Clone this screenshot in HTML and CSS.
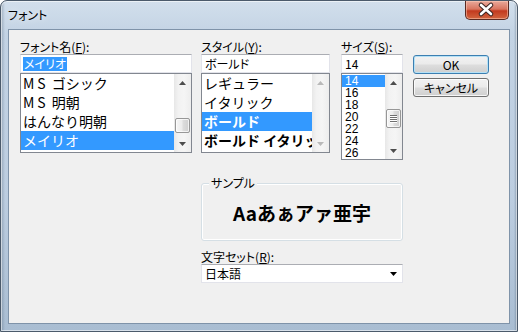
FILE: index.html
```html
<!DOCTYPE html>
<html lang="ja">
<head>
<meta charset="utf-8">
<title>フォント</title>
<link rel="stylesheet" href="styles.css">
</head>
<body>
<div class="window">
  <div class="titlebar"><span class="title">フォント</span></div>
  <div class="close">
    <svg width="44" height="19" viewBox="0 0 44 19">
      <path d="M17 5 L27 14 M27 5 L17 14" stroke="#3a2320" stroke-width="4.6" stroke-linecap="round"/>
      <path d="M17 5 L27 14 M27 5 L17 14" stroke="#ffffff" stroke-width="2.6" stroke-linecap="round"/>
    </svg>
  </div>
  <div class="client">
    <div class="top">
      <div class="col col-font">
        <div class="label">フォント名(<u>F</u>):</div>
        <div class="input"><span class="sel">メイリオ</span></div>
        <div class="list list-font">
          <div class="items">
            <div class="item"><span class="ms">MS</span> ゴシック</div>
            <div class="item"><span class="ms">MS</span> 明朝</div>
            <div class="item">はんなり明朝</div>
            <div class="item selected">メイリオ</div>
          </div>
          <div class="sb">
            <div class="arr"><svg width="7" height="4" viewBox="0 0 7 4"><polygon points="3.5,0 7,4 0,4"/></svg></div>
            <div class="track"><div class="sp sp-font"></div><div class="thumb thumb-font"></div></div>
            <div class="arr"><svg width="7" height="4" viewBox="0 0 7 4"><polygon points="0,0 7,0 3.5,4"/></svg></div>
          </div>
        </div>
      </div>
      <div class="col col-style">
        <div class="label">スタイル(<u>Y</u>):</div>
        <div class="input">ボールド</div>
        <div class="list list-style">
          <div class="items">
            <div class="item">レギュラー</div>
            <div class="item">イタリック</div>
            <div class="item selected bold">ボールド</div>
            <div class="item bold">ボールド イタリック</div>
          </div>
          <div class="sb disabled">
            <div class="arr"><svg width="7" height="4" viewBox="0 0 7 4"><polygon points="3.5,0 7,4 0,4"/></svg></div>
            <div class="track"></div>
            <div class="arr"><svg width="7" height="4" viewBox="0 0 7 4"><polygon points="0,0 7,0 3.5,4"/></svg></div>
          </div>
        </div>
      </div>
      <div class="col col-size">
        <div class="label">サイズ(<u>S</u>):</div>
        <div class="input">14</div>
        <div class="list list-size">
          <div class="items">
            <div class="item selected">14</div>
            <div class="item">16</div>
            <div class="item">18</div>
            <div class="item">20</div>
            <div class="item">22</div>
            <div class="item">24</div>
            <div class="item">26</div>
          </div>
          <div class="sb">
            <div class="arr"><svg width="7" height="4" viewBox="0 0 7 4"><polygon points="3.5,0 7,4 0,4"/></svg></div>
            <div class="track"><div class="sp sp-size"></div><div class="thumb thumb-size"><span></span><span></span><span></span><span></span></div></div>
            <div class="arr"><svg width="7" height="4" viewBox="0 0 7 4"><polygon points="0,0 7,0 3.5,4"/></svg></div>
          </div>
        </div>
      </div>
      <div class="buttons">
        <div class="btn default">OK</div>
        <div class="btn">キャンセル</div>
      </div>
    </div>
    <div class="lower">
      <div class="group">
        <span class="legend">サンプル</span>
        <div class="sample">Aaあぁアァ亜宇</div>
      </div>
      <div class="label label-charset">文字セット(<u>R</u>):</div>
      <div class="combo">
        <span>日本語</span>
        <svg width="7" height="4" viewBox="0 0 7 4"><polygon points="0,0 7,0 3.5,4" fill="#000"/></svg>
      </div>
    </div>
  </div>
</div>
</body>
</html>
```

FILE: styles.css
```css
html, body {
  margin: 0;
  padding: 0;
  background: #ffffff;
}

body {
  font-family: "Noto Sans CJK JP", "Noto Sans", sans-serif;
  color: #000;
}

.window {
  position: relative;
  width: 518px;
  height: 332px;
  box-sizing: border-box;
  border: 1px solid #4b5a6b;
  border-radius: 7px 7px 0 0;
  background:
    linear-gradient(90deg, rgba(70,90,110,0.35) 0px, rgba(0,0,0,0) 4px, rgba(0,0,0,0) 513px, rgba(70,90,110,0.45) 516px),
    linear-gradient(180deg, #d2dfec 0%, #c3d3e4 10%, #bccde0 60%, #a9bdd2 100%);
  padding: 0 7px 7px 7px;
  display: flex;
  flex-direction: column;
  box-shadow: inset 0 0 0 1px rgba(255,255,255,0.55);
}

.titlebar {
  height: 28px;
  display: flex;
  align-items: center;
  flex-shrink: 0;
}

.title {
  font-size: 12px;
  line-height: 14px;
  font-feature-settings: "palt";
  color: #000;
  text-shadow: 0 0 6px rgba(255,255,255,0.9);
}

.close {
  position: absolute;
  top: 0;
  right: 8px;
  width: 44px;
  height: 19px;
  box-sizing: border-box;
  border: 1px solid #5a2a22;
  border-top: none;
  border-radius: 0 0 5px 5px;
  background: linear-gradient(180deg, #e9a99b 0%, #d9755f 45%, #c23a1f 55%, #d2653f 100%);
  box-shadow: inset 0 0 0 1px rgba(255,210,190,0.5);
  display: flex;
  align-items: center;
  justify-content: center;
}

.close svg {
  display: block;
  margin-left: -2px;
  margin-top: -1px;
}

.client {
  height: 295px;
  box-sizing: border-box;
  background: #f0f0f0;
  border: 1px solid #7f93a9;
  padding: 10px 0 0 11px;
  display: flex;
  flex-direction: column;
}

.top {
  display: flex;
  align-items: flex-start;
}

.col {
  display: flex;
  flex-direction: column;
}

.col-font { width: 172px; }
.col-style { width: 129px; margin-left: 9px; }
.col-size { width: 62px; margin-left: 11px; }

.label {
  font-size: 12px;
  line-height: 14px;
  height: 14px;
  font-feature-settings: "palt";
  white-space: nowrap;
}

.label u {
  text-decoration: underline;
  text-underline-offset: 1px;
}

.input {
  height: 19px;
  box-sizing: border-box;
  border: 1px solid #e2e3ea;
  border-top-color: #abadb3;
  background: #fff;
  font-size: 12px;
  line-height: 17px;
  padding-left: 3px;
  font-feature-settings: "palt";
  white-space: nowrap;
}

.input .sel {
  background: #3399ff;
  color: #fff;
  display: inline-block;
  line-height: 14px;
  padding: 0 1px;
  margin-left: -1px;
}

.list {
  display: flex;
  box-sizing: border-box;
  border: 1px solid #828790;
  background: #fff;
  overflow: hidden;
}

.list-font, .list-style { height: 80px; }
.list-size { height: 87px; }

.items {
  flex: 1;
  min-width: 0;
  overflow: hidden;
}

.item {
  height: 19px;
  line-height: 19px;
  font-size: 14px;
  padding-left: 2px;
  white-space: nowrap;
  overflow: hidden;
}

.item .ms {
  letter-spacing: 3px;
}

.item.selected {
  background: #3399ff;
  color: #fff;
}

.item.bold { font-weight: 700; }

.list-size .item {
  height: 12px;
  line-height: 12px;
  font-family: "Liberation Sans", "Noto Sans", sans-serif;
  font-size: 12px;
  padding-left: 3px;
}

.list-size .item:first-child { margin-top: 1px; }

.sb {
  width: 17px;
  flex-shrink: 0;
  display: flex;
  flex-direction: column;
  background: linear-gradient(90deg, #e7e7e7 0%, #f2f2f2 25%, #f5f5f5 60%, #ededed 100%);
}

.arr {
  height: 17px;
  display: flex;
  align-items: center;
  justify-content: center;
  flex-shrink: 0;
}

.arr svg { display: block; fill: #4d4d4d; }
.sb.disabled .arr svg { fill: #b9b9b9; }

.track {
  flex: 1;
  display: flex;
  flex-direction: column;
  align-items: center;
}

.sp-font { height: 27px; flex-shrink: 0; }
.sp-size { height: 18px; flex-shrink: 0; }

.thumb {
  width: 15px;
  box-sizing: border-box;
  border: 1px solid #979797;
  border-radius: 2px;
  background: linear-gradient(90deg, #f6f6f6 0%, #ececec 45%, #dcdcdc 55%, #cfcfcf 100%);
  box-shadow: inset 0 0 0 1px rgba(255,255,255,0.7);
  flex-shrink: 0;
}

.thumb-font { height: 15px; }

.thumb-size {
  height: 19px;
  display: flex;
  flex-direction: column;
  align-items: center;
  justify-content: center;
  gap: 1px;
}

.thumb-size span {
  width: 7px;
  height: 1px;
  background: #6f6f6f;
  box-shadow: 0 1px 0 #ffffff;
}

.buttons {
  width: 76px;
  margin-left: 10px;
  padding-top: 15px;
  display: flex;
  flex-direction: column;
  gap: 4px;
}

.btn {
  height: 19px;
  box-sizing: border-box;
  border: 1px solid #707070;
  border-radius: 3px;
  background: linear-gradient(180deg, #f2f2f2 0%, #ebebeb 48%, #dddddd 52%, #cfcfcf 100%);
  box-shadow: inset 0 0 0 1px rgba(255,255,255,0.8);
  font-size: 12px;
  line-height: 17px;
  text-align: center;
  font-feature-settings: "palt";
}

.btn.default {
  border-color: #3c7fb1;
  box-shadow: inset 0 0 0 1px #b5e1f6;
}

.lower {
  margin-left: 181px;
  width: 202px;
  display: flex;
  flex-direction: column;
}

.group {
  position: relative;
  margin-top: 23px;
  height: 58px;
  box-sizing: border-box;
  border: 1px solid #d5dfe5;
  border-radius: 3px;
  box-shadow: inset 0 0 0 1px #ffffff;
  display: flex;
  align-items: center;
  justify-content: center;
}

.legend {
  position: absolute;
  top: -8px;
  left: 7px;
  padding: 0 2px;
  background: #f0f0f0;
  font-size: 12px;
  line-height: 14px;
  font-feature-settings: "palt";
}

.sample {
  font-size: 19px;
  font-weight: 700;
  line-height: 22px;
  margin-top: 2px;
  white-space: nowrap;
}

.label-charset {
  margin-top: 9px;
}

.combo {
  height: 19px;
  box-sizing: border-box;
  border: 1px solid #e2e3ea;
  border-top-color: #abadb3;
  background: #fff;
  display: flex;
  align-items: center;
  justify-content: space-between;
  padding: 0 5px 0 3px;
  font-size: 12px;
  line-height: 17px;
}

.combo svg { display: block; }
```
